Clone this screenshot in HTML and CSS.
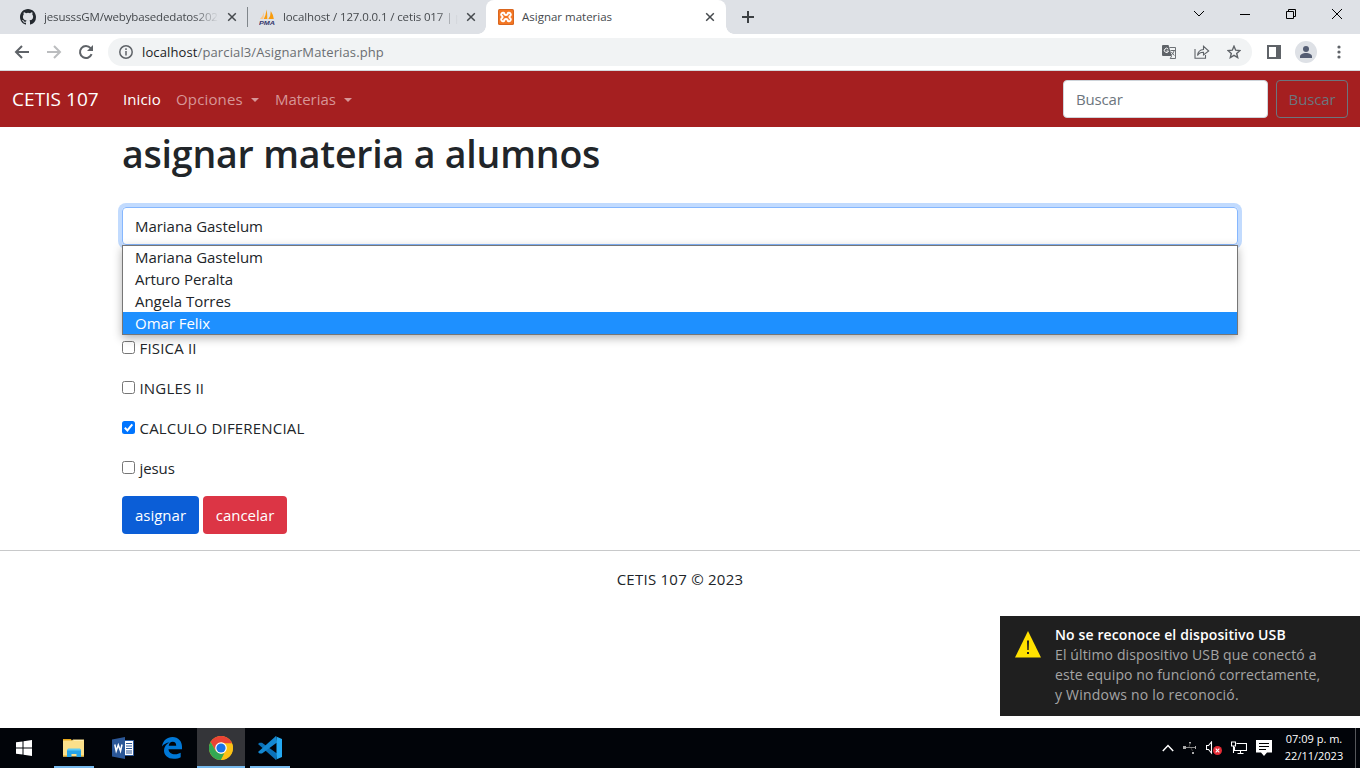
FILE: index.html
```html
<!DOCTYPE html>
<html lang="es">
<head>
<meta charset="utf-8">
<title>Asignar materias</title>
<link rel="stylesheet" href="styles.css">
</head>
<body>
<div class="screen">
  <header class="tabstrip">
    <div class="tab tab-first">
      <svg class="favicon" viewBox="0 0 16 16"><path fill="#24292f" d="M8 0C3.580 0 0 3.580 0 8c0 3.540 2.290 6.530 5.470 7.590.4.070.55-.17.55-.38 0-.19-.01-.82-.01-1.490-2.010.37-2.530-.49-2.690-.94-.09-.23-.48-.94-.82-1.130-.28-.15-.68-.52-.01-.53.63-.01 1.080.58 1.230.82.72 1.210 1.870.87 2.330.66.070-.52.28-.87.51-1.070-1.780-.2-3.640-.89-3.640-3.950 0-.87.31-1.590.82-2.150-.08-.2-.36-1.020.08-2.120 0 0 .67-.21 2.200.82a7.600 7.600 0 0 1 4 0c1.530-1.040 2.200-.82 2.200-.82.44 1.100.16 1.920.08 2.120.51.56.82 1.270.82 2.150 0 3.070-1.870 3.750-3.650 3.950.29.25.54.73.54 1.480 0 1.070-.01 1.930-.01 2.200 0 .21.15.46.55.38A8.010 8.010 0 0 0 16 8c0-4.420-3.580-8-8-8z"/></svg>
      <span class="tab-title title-github">jesusssGM/webybasededatos202</span>
      <svg class="close" viewBox="0 0 10 10"><path d="M1.200 1.200l7.600 7.600M8.800 1.200l-7.600 7.600"/></svg>
    </div>
    <div class="tab tab-second">
      <svg class="favicon" viewBox="0 0 16 16"><path fill="#f89c0e" d="M7.500 0.500Q8.500 5 8.300 10H4.800Q7 6 7.500.5zM11.800 2Q14.500 6 14.800 10H9.300Q11.800 7 11.800 2z"/><path fill="#fbc787" d="M5 3Q5 7 4.200 10H1Q4 7 5 3z"/><text class="pma" x="0" y="15.500" textLength="16" lengthAdjust="spacingAndGlyphs">PMA</text></svg>
      <span class="tab-title title-pma">localhost / 127.0.0.1 / cetis 017 | p</span>
      <svg class="close" viewBox="0 0 10 10"><path d="M1.200 1.200l7.600 7.600M8.800 1.200l-7.600 7.600"/></svg>
    </div>
    <div class="tab tab-active">
      <svg class="favicon" viewBox="0 0 16 16"><rect width="16" height="16" rx="1.500" fill="#d9661f"/><rect x="1" y="1" width="14" height="14" rx="1" fill="#f37623"/><path d="M5.400 3.700H4.800a1.800 1.800 0 0 0-.6 3.400Q5.200 8 4.200 8.900a1.800 1.800 0 0 0 .6 3.400h.6Q6.500 12.300 6.500 10.500 8 9.500 9.500 10.500q0 1.800 1.100 1.800h.6a1.800 1.800 0 0 0 .6-3.400Q10.800 8 11.800 7.100a1.800 1.800 0 0 0-.6-3.400h-.6Q9.500 3.700 9.500 5.500 8 6.500 6.500 5.500 6.500 3.700 5.400 3.700z" fill="none" stroke="#fff" stroke-width="1.900"/></svg>
      <span class="tab-title">Asignar materias</span>
      <svg class="close" viewBox="0 0 10 10"><path d="M1.200 1.200l7.600 7.600M8.800 1.200l-7.600 7.600"/></svg>
    </div>
    <svg class="newtab" viewBox="0 0 12 12"><path d="M6 0v12M0 6h12"/></svg>
    <svg class="window-controls" viewBox="0 0 144 12"><path d="M1 4l5 5 5-5M47 7.500H57M93.500 4.500h7v7h-7zM95.500 4.500v-2h7v7h-2M139 2l10 10M149 2l-10 10" /></svg>
  </header>

  <div class="toolbar">
    <svg class="nav-icon" viewBox="0 0 16 16"><path d="M15 8H2M8 2L2 8l6 6"/></svg>
    <svg class="nav-icon disabled" viewBox="0 0 16 16"><path d="M1 8h13M8 2l6 6-6 6"/></svg>
    <svg class="nav-icon" viewBox="0 0 16 16"><path d="M13.600 10.200A6 6 0 1 1 12.600 4.200"/><path class="solid" d="M15 1v6H9z"/></svg>
    <div class="omnibox">
      <svg class="info" viewBox="0 0 14 14"><circle cx="7" cy="7" r="6.200"/><path d="M7 6v4.500M7 3.300v1.600"/></svg>
      <span class="url"><span class="host">localhost</span>/parcial3/AsignarMaterias.php</span>
      <svg class="translate" viewBox="0 0 14 14"><path fill="#5f6368" d="M1 0h5.500l3.300 11H1a1 1 0 0 1-1-1V1a1 1 0 0 1 1-1z"/><path d="M7.500 2.500h6v11H8.200l1.500-2.500M8.500 5.500H13M10.700 5v1M12 6q-.6 2.500-2.700 4M9.300 7l3 3.500" fill="none" stroke="#5f6368" stroke-width=".9"/><path d="M6.200 4.200A2.100 2.100 0 1 0 6.500 6H4.500" fill="none" stroke="#fff" stroke-width="1"/></svg>
      <svg class="share" viewBox="0 0 16 14"><path d="M1 4v9.300h10.500V10M3.500 10.500Q4 5 9.500 4.500V1.300L14.700 6 9.500 10V7.300Q5.500 7.200 3.500 10.500z"/></svg>
      <svg class="star" viewBox="0 0 14 14"><path d="M7 1.200l1.700 4 4.200.4-3.200 2.800 1 4.200L7 10.400l-3.700 2.200 1-4.200-3.200-2.800 4.200-.4z"/></svg>
    </div>
    <svg class="sidepanel" viewBox="0 0 14 14"><path fill="#5f6368" d="M0 0h14v14H0zM2 2v10h7V2z" fill-rule="evenodd"/></svg>
    <svg class="avatar" viewBox="0 0 22 22"><circle cx="11" cy="11" r="11" fill="#dee1e6"/><circle cx="11" cy="8" r="3" fill="#545d73"/><path d="M5 17v-1.500c0-2 3-3.500 6-3.500s6 1.500 6 3.500V17z" fill="#545d73"/></svg>
    <svg class="kebab" viewBox="0 0 4 14"><circle cx="2" cy="2" r="1.600"/><circle cx="2" cy="7" r="1.600"/><circle cx="2" cy="12" r="1.600"/></svg>
  </div>

  <nav class="navbar">
    <a class="brand">CETIS 107</a>
    <a class="nav-link current">Inicio</a>
    <a class="nav-link caret opciones">Opciones</a>
    <a class="nav-link caret materias">Materias</a>
    <div class="search"><span>Buscar</span></div>
    <div class="search-btn">Buscar</div>
  </nav>

  <main class="content">
    <h1>asignar materia a alumnos</h1>
    <div class="select">Mariana Gastelum
      <div class="options">
        <div class="option">Mariana Gastelum</div>
        <div class="option">Arturo Peralta</div>
        <div class="option">Angela Torres</div>
        <div class="option selected">Omar Felix</div>
      </div>
    </div>
    <div class="subjects">
      <label class="check"><i class="box"></i><span class="caps">FISICA II</span></label>
      <label class="check"><i class="box"></i><span class="caps">INGLES II</span></label>
      <label class="check"><i class="box checked"><svg viewBox="0 0 13 13"><path d="M2.800 6.800l2.600 2.600 4.900-6"/></svg></i><span class="caps">CALCULO DIFERENCIAL</span></label>
      <label class="check"><i class="box"></i><span class="lower">jesus</span></label>
    </div>
    <div class="buttons"><div class="btn primary">asignar</div><div class="btn danger">cancelar</div></div>
  </main>
  <footer class="footer">CETIS 107 © 2023</footer>

  <aside class="toast">
    <svg class="warning" viewBox="0 0 26 27"><path d="M13 0l13 26.500H0z" fill="#ffe100"/><path d="M12 9.500h2l-.3 9.500h-1.400zM12 21h2v2h-2z" fill="#1f1f1f"/></svg>
    <div class="toast-text">
      <strong>No se reconoce el dispositivo USB</strong>
      <span class="line-a">El último dispositivo USB que conectó a</span>
      <span class="line-b">este equipo no funcionó correctamente,</span>
      <span class="line-c">y Windows no lo reconoció.</span>
    </div>
  </aside>

  <div class="taskbar">
    <div class="task start"><svg width="16" height="16" viewBox="0 0 16 16"><path fill="#fff" d="M0 2.300l6.500-.9v6.100H0zM7.500 1.200L16 0v7.500H7.500zM0 8.500h6.500v6.100L0 13.700zM7.500 8.500H16V16l-8.500-1.200z"/></svg></div>
    <div class="task running"><svg width="22" height="20" viewBox="0 0 22 20"><path fill="#e8a91c" d="M0 1h8l1 2H0z"/><path fill="#fbe08b" d="M0 2.500h9l1-1h11v17H0z"/><path fill="#ffeeb0" d="M11 2h9v1h-9z"/><path fill="#27a4e8" d="M4 12l2-1h11l1 1v7h-4.500v-3h-5v3H4z"/><path fill="#5ecbf5" d="M5 10.500h12l1 2H4z"/><path fill="#f5c84e" d="M0 17h4v1.500H0zM18 17h3v1.500h-3z"/></svg></div>
    <div class="task"><svg width="22" height="22" viewBox="0 0 22 22"><path fill="#fff" stroke="#2b5797" d="M12 3.500h9.500v15H12z"/><path stroke="#2b5797" d="M14 6.500h6M14 9h6M14 11.500h6M14 14h6M14 16h6"/><path fill="#2b5797" d="M0 2.500L13 0v22L0 19.500z"/><path d="M2.800 7.500l1.400 6.500 2.100-6 2.200 6 1.500-6.500" fill="none" stroke="#fff" stroke-width="1.500"/></svg></div>
    <div class="task"><svg width="20" height="22" viewBox="0 0 20 22"><path fill="#0078d7" d="M0 9.500C1 3.500 5 0 10.500 0 16.500 0 20 4.500 20 9.500v2.800H6.500c.3 3.400 3 5 6.500 5 2.200 0 4.200-.6 5.700-1.500v4.400c-1.800 1.100-4.300 1.600-7 1.600C5.500 21.800 2 18 2 13.500 2 9.800 4.200 7 7.500 5.500 4.500 5.700 2 7 0 9.500zM6.700 8.700h7.500c0-2.600-1.200-4-3.500-4-2.200 0-3.600 1.400-4 4z"/></svg></div>
    <div class="task chrome"><svg width="24" height="24" viewBox="0 0 24 24"><circle cx="12" cy="12" r="12" fill="#fbc116"/><path fill="#ea4335" d="M1.600 6A12 12 0 0 1 22.400 6H12v6L6.800 15z"/><path fill="#34a853" d="M1.600 6l5.200 9 5.200 3 3.300-.8L12 24A12 12 0 0 1 1.600 6z"/><path fill="#fbc116" d="M12 24l5.200-9L16 7h6.900A12 12 0 0 1 12 24z"/><path fill="#ea4335" d="M10 6h12.400l.5 1.200H16z"/><circle cx="12" cy="12" r="5.800" fill="#fff"/><circle cx="12" cy="12" r="4.600" fill="#1a73e8"/></svg></div>
    <div class="task running code"><svg width="24" height="24" viewBox="0 0 24 24"><path fill="#0b72b8" d="M1.500 6.800L0 8l18 16 1-6.600L4 6.800z"/><path fill="#1488d1" d="M0 16l1.500 1.400H4L19 6.600 18 0z"/><path fill="#24a9f2" d="M17 0l7 3v18l-7 3 1.500-1V1z"/></svg></div>
    <div class="tray">
      <svg width="12" height="8" viewBox="0 0 12 8"><path class="white" d="M.8 7L6 1.500 11.200 7"/></svg>
      <svg width="14" height="14" viewBox="0 0 14 14"><path d="M1 6.500h12" fill="none" stroke="#888"/><path d="M6 6L7 3M8 7l1.500 3" fill="none" stroke="#444"/><path fill="#aaa" d="M0 5h3v3H0zM12 5h1v3h-1zM6 1h2v1.500H6zM9 11h2v2H9z"/></svg>
      <svg width="16" height="14" viewBox="0 0 16 14"><path class="white thin" d="M.5 4.500h2l3-3.500v11l-3-3.500h-2z"/><circle cx="11.500" cy="9.500" r="4.500" fill="#e32b35"/><path class="white thin" d="M9.700 7.700l3.600 3.600M13.300 7.700l-3.600 3.600"/></svg>
      <svg width="16" height="14" viewBox="0 0 16 14"><path class="white thin" d="M5.500 2.500h10v7h-12V6M.5 1h4v4h-4zM2.500 5v7M9.500 9.500v3M6.500 12.500h6"/></svg>
      <svg width="16" height="16" viewBox="0 0 16 16"><path fill="#fff" d="M0 0h16v12.500h-5L8 16l-3-3.500H0z"/><path stroke="#000" d="M3 3.500h10M3 6.500h10M3 9.500h7"/></svg>
    </div>
    <div class="clock"><span>07:09 p. m.</span><span>22/11/2023</span></div>
    <div class="show-desktop"></div>
  </div>
</div>
</body>
</html>
```

FILE: styles.css
```css
* { box-sizing: border-box; }
body { margin: 0; background: #fff; font-family: "Open Sans", sans-serif; font-size: 15px; color: #212529; }
svg { display: block; flex: none; }
.screen { position: relative; display: flex; flex-direction: column; width: 1360px; height: 768px; overflow: hidden; }

.tabstrip { display: flex; align-items: center; height: 34px; background: #dee1e6; font-size: 11.5px; color: #45494d; }
.tab { display: flex; align-items: center; height: 34px; }
.tab-first { width: 248px; padding: 0 11px 0 20px; background: linear-gradient(#80868b, #80868b) right 0 center / 1px 20px no-repeat; }
.tab-second { width: 238px; padding: 0 10px 0 11px; }
.tab-active { position: relative; width: 240px; padding: 0 11px 0 12px; background: #fff; border-radius: 8px 8px 0 0; }
.tab-active::before, .tab-active::after { content: ""; position: absolute; bottom: 0; width: 8px; height: 8px; }
.tab-active::before { left: -8px; background: radial-gradient(circle at 0 0, transparent 7.500px, #fff 8px); }
.tab-active::after { right: -8px; background: radial-gradient(circle at 100% 0, transparent 7.500px, #fff 8px); }
.favicon { width: 16px; height: 16px; }
.tab-title { flex: 1; min-width: 0; margin: 0 8px; white-space: nowrap; line-height: 20px; }
.title-github { letter-spacing: -.15px; -webkit-mask-image: linear-gradient(90deg, #000 85%, transparent); mask-image: linear-gradient(90deg, #000 85%, transparent); }
.title-pma { letter-spacing: -.12px; -webkit-mask-image: linear-gradient(90deg, #000 88%, transparent); mask-image: linear-gradient(90deg, #000 88%, transparent); }
.pma { font: italic bold 6px "Liberation Sans", sans-serif; fill: #34366c; }
.close { width: 10px; height: 10px; fill: none; stroke: #45494d; stroke-width: 1.5; }
.newtab { width: 12px; height: 12px; margin-left: 16px; stroke: #3c4043; stroke-width: 2; }
.window-controls { width: 144px; height: 12px; margin: -8px 23px 0 auto; fill: none; stroke: #000; overflow: visible; }

.toolbar { display: flex; align-items: center; height: 37px; padding: 0 19px 0 14px; border-bottom: 1px solid #d5d7da; }
.nav-icon { width: 16px; height: 16px; margin-right: 16px; fill: none; stroke: #5f6368; stroke-width: 2; }
.nav-icon .solid { fill: #5f6368; stroke: none; }
.disabled { stroke: #bbbdbf; }
.omnibox { display: flex; align-items: center; width: 1144px; height: 28px; margin-left: -2px; padding: 0 11px; border-radius: 14px; background: #f1f3f4; }
.info { width: 14px; height: 14px; fill: none; stroke: #5f6368; stroke-width: 1.5; }
.url { flex: 1; margin-left: 9px; font-size: 13px; letter-spacing: .12px; color: #6a6e72; line-height: 20px; }
.host { color: #202124; }
.translate { width: 14px; height: 14px; }
.share { width: 16px; height: 14px; margin-left: 18px; fill: none; stroke: #5f6368; stroke-width: 1.1; }
.star { width: 14px; height: 14px; margin: 0 0 0 17px; fill: none; stroke: #5f6368; stroke-width: 1.4; }
.sidepanel { width: 14px; height: 14px; margin-left: 15px; }
.avatar { width: 22px; height: 22px; margin-left: 14px; }
.kebab { width: 4px; height: 14px; margin-left: auto; fill: #5f6368; }

.navbar { display: flex; align-items: center; height: 56px; padding: 0 12px; background: #a51f20; color: #fff; }
.brand { width: 111px; font-size: 19px; white-space: nowrap; letter-spacing: .06px; }
.nav-link { width: 53px; color: #d79697; white-space: nowrap; }
.current { color: #fff; letter-spacing: .1px; }
.opciones { width: 99px; letter-spacing: .15px; }
.materias { width: 90px; }
.caret::after { content: ""; display: inline-block; margin-left: 8px; vertical-align: 3px; border: 4.500px solid transparent; border-top-color: currentColor; border-bottom: 0; }
.search { width: 205px; height: 38px; margin-left: auto; padding: 0 12px; line-height: 36px; background: #fff; border: 1px solid #ced4da; border-radius: 4px; color: #6c757d; letter-spacing: -.15px; }
.search-btn { width: 72px; height: 38px; margin-left: 8px; border: 1px solid #6c757d; border-radius: 4px; color: #6c757d; line-height: 36px; text-align: center; letter-spacing: -.15px; }

.content { width: 1116px; margin: 0 auto; }
h1 { margin: 0; height: 80px; font-size: 37.500px; font-weight: 600; letter-spacing: -.2px; line-height: 53px; white-space: nowrap; }
.select { position: relative; height: 38px; padding: 0 12px; border: 1px solid #86b7fe; border-radius: 4px; line-height: 36px; letter-spacing: -.04px; box-shadow: 0 0 0 4px #c2dbfe; }
.options { position: absolute; left: -1px; top: 37px; width: 1116px; border: 1px solid #767676; background: #fff; box-shadow: 0 3px 9px rgba(0,0,0,.3); line-height: 22px; }
.option { height: 22px; padding-left: 12px; }
.selected { background: #1e90ff; color: #fff; }
.subjects { display: flex; flex-direction: column; gap: 16px; padding-top: 91px; }
.check { display: flex; gap: 4.500px; height: 24px; line-height: 24px; white-space: nowrap; }
.caps { letter-spacing: .18px; }
.lower { letter-spacing: -.1px; }
.box { flex: none; width: 13px; height: 13px; margin-top: 5px; border: 1px solid #767676; border-radius: 2.500px; background: #fff; }
.checked { border: 0; background: #0075ff; }
.checked path { fill: none; stroke: #fff; stroke-width: 2; }
.buttons { display: flex; gap: 4px; margin-top: 16px; }
.btn { height: 38px; border-radius: 4px; color: #fff; line-height: 38px; text-align: center; }
.primary { width: 77px; background: #0b5ed7; }
.danger { width: 84px; background: #dc3545; }
.footer { margin-top: 16px; padding-top: 16px; border-top: 1px solid #c8c9ca; line-height: 24px; text-align: center; letter-spacing: .25px; }

.toast { position: absolute; left: 1000px; top: 616px; display: flex; width: 360px; height: 100px; padding: 9px 0 0 15px; background: #1f1f1f; }
.warning { width: 26px; height: 27px; margin-top: 6px; }
.toast-text { display: flex; flex-direction: column; margin-left: 14px; font-size: 14px; line-height: 20px; color: #a5a5a5; white-space: nowrap; }
.toast-text strong { color: #fff; font-weight: 600; letter-spacing: .12px; }
.line-a { letter-spacing: .13px; }
.line-b { letter-spacing: .09px; }
.line-c { letter-spacing: .22px; }

.taskbar { display: flex; align-items: center; height: 40px; margin-top: auto; background: #010409; color: #fff; }
.task { display: flex; align-items: center; justify-content: center; width: 40px; height: 40px; margin-right: 9px; }
.start { width: 48px; margin-right: 6px; }
.running { border-bottom: 2px solid #76b9ed; padding-top: 2px; }
.chrome { width: 48px; margin: 0 5px 0 -4px; background: #343539; border-bottom: 2px solid #76b9ed; padding-top: 2px; }
.tray { display: flex; align-items: center; gap: 9px; margin-left: auto; }
.tray .white { fill: none; stroke: #fff; stroke-width: 1.5; }
.tray .thin { stroke-width: 1.1; }
.clock { display: flex; flex-direction: column; width: 83px; margin-top: -2px; padding-left: 1px; font-size: 11px; line-height: 17px; text-align: center; white-space: nowrap; }
.show-desktop { width: 5px; height: 40px; border-left: 1px solid #55575a; }
```
